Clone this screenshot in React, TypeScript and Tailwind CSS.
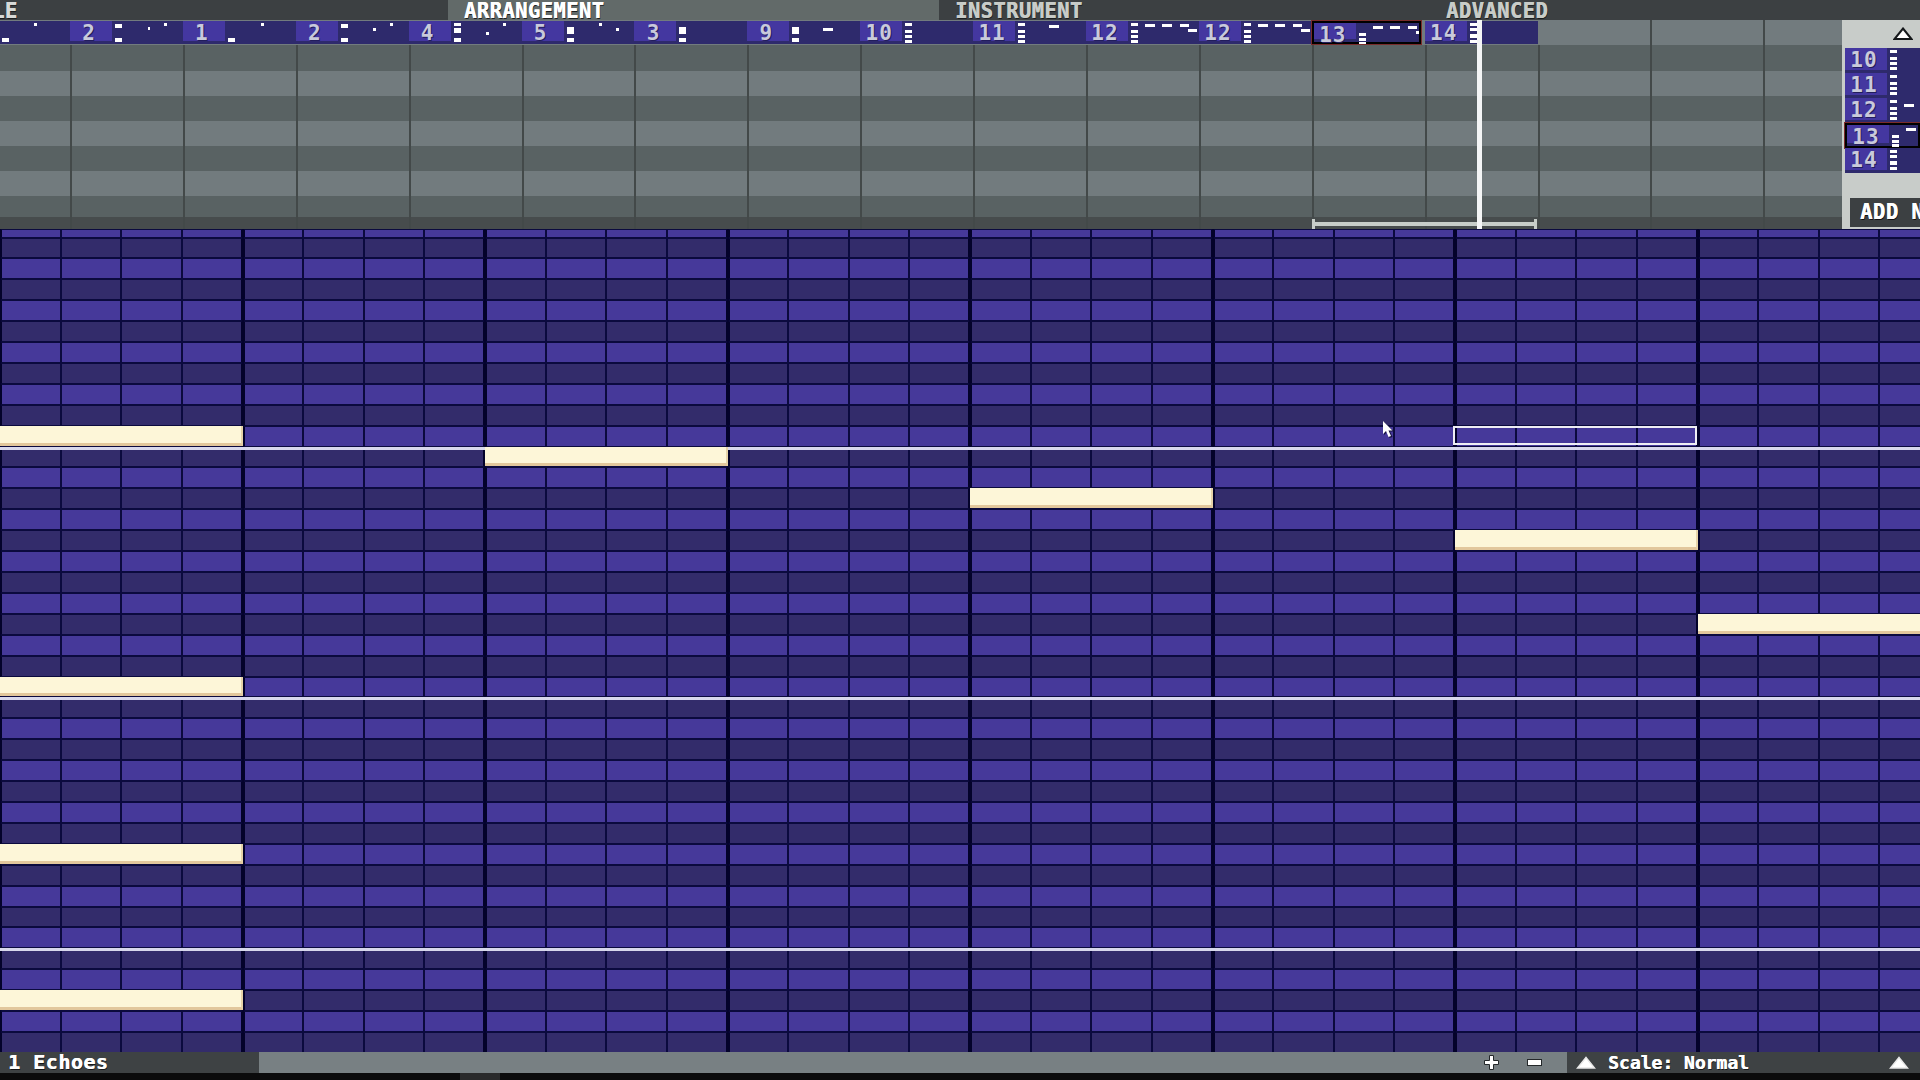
import React from 'react';

type Mark = [number, number, number, number];

// left stack of marks sits at x=3 in the thumbnail, the rest are short dashes
const TWO: Mark[] = [[3, 3, 7, 4], [3, 17, 7, 4]];
const LOW: Mark[] = [[3, 17, 7, 4]];
const BLOCK: Mark[] = [[3, 6, 7, 7], [3, 17, 7, 4]];
const FOUR: Mark[] = [[3, 2, 7, 3], [3, 9, 7, 3], [3, 14, 7, 3], [3, 19, 7, 3]];
const THREE: Mark[] = [[3, 10, 7, 3], [3, 15, 7, 3], [3, 19, 7, 3]];
const RUN: Mark[] = [[17, 3, 10, 3], [34, 3, 10, 3], [52, 3, 9, 3], [60, 8, 9, 3]];

const patterns: { num: string; selected?: boolean; marks: Mark[] }[] = [
  { num: '2', marks: [...TWO, [36, 6, 2, 3], [52, 2, 3, 3]] },
  { num: '1', marks: [...LOW, [36, 2, 3, 3]] },
  { num: '2', marks: [...TWO, [35, 7, 3, 3], [52, 2, 3, 3]] },
  { num: '4', marks: [[3, 2, 7, 3], [3, 7, 7, 5], [3, 17, 7, 4], [35, 11, 3, 3], [52, 2, 3, 3]] },
  { num: '5', marks: [...BLOCK, [35, 2, 3, 3], [52, 7, 3, 3]] },
  { num: '3', marks: BLOCK },
  { num: '9', marks: [...BLOCK, [34, 7, 10, 3]] },
  { num: '10', marks: FOUR },
  { num: '11', marks: [...FOUR, [34, 4, 10, 3]] },
  { num: '12', marks: [...FOUR, ...RUN] },
  { num: '12', marks: [...FOUR, ...RUN] },
  { num: '13', selected: true, marks: [...THREE, ...RUN] },
  { num: '14', marks: [[3, 2, 7, 3], [3, 7, 7, 3], [3, 13, 7, 4], [3, 19, 7, 3]] },
];

const listItems = [
  { num: '10', marks: FOUR },
  { num: '11', marks: FOUR },
  { num: '12', marks: [...FOUR, [17, 6, 10, 3]] as Mark[] },
  { num: '13', selected: true, marks: [...THREE, [17, 3, 10, 3]] as Mark[] },
  { num: '14', marks: [[3, 2, 7, 3], [3, 7, 7, 3], [3, 13, 7, 4], [3, 19, 7, 3]] as Mark[] },
];

const stripes = [
  'h-[25px] bg-[#727b7e]',
  'h-[26px] bg-[#596263]',
  'h-[25px] bg-[#727b7e]',
  'h-[25px] bg-[#596263]',
  'h-[25px] bg-[#727b7e]',
  'h-[25px] bg-[#596263]',
  'h-[25px] bg-[#727b7e]',
  'h-[21px] bg-[#596263]',
  'h-[12px] bg-[#474c4d]',
];

const notes = [
  'row-start-[11] col-start-1',
  'row-start-[12] col-start-9',
  'row-start-[14] col-start-17',
  'row-start-[16] col-start-25',
  'row-start-[20] col-start-29',
  'row-start-[23] col-start-1',
  'row-start-[31] col-start-1',
  'row-start-[38] col-start-1',
];

const octaves = ['row-start-[12]', 'row-start-[24]', 'row-start-[36]'];

const ROWS = Array.from({ length: 40 }, (_, i) => i);
const COLS = Array.from({ length: 32 }, (_, i) => i);

function Pattern({ num, marks, selected, tall }: { num: string; marks: Mark[]; selected?: boolean; tall?: boolean }) {
  return (
    <div
      className={`flex bg-[#2e2a6c] ${tall ? 'h-[25px]' : 'h-[23px]'} ${
        selected ? 'border-2 border-black outline outline-[#7a2b2b]' : ''
      } ${selected && !tall ? 'mr-[4px]' : ''}`}
    >
      <div className="w-[42px] shrink-0 border-b-[3px] border-[#2e2a6c] bg-[#4437a0] pr-[4px] text-center text-[21px] leading-[24px] font-bold tracking-[1px] text-[#c9cadb] [text-shadow:1px_1px_0_#221d5c]">
        {num}
      </div>
      <svg height="23" className="min-w-0 flex-1">
        {marks.map(([x, y, w, h], i) => (
          <rect key={i} x={x} y={y} width={w} height={h} fill="#ffffff" />
        ))}
      </svg>
    </div>
  );
}

function UpArrow({ outline }: { outline?: boolean }) {
  return (
    <svg width="20" height="14" viewBox="0 0 20 14" className="shrink-0">
      <path
        d="M10 1.5 L18.5 12 L1.5 12 Z"
        fill="#ffffff"
        stroke={outline ? '#15181a' : '#e8e8e8'}
        strokeWidth={outline ? 2 : 1.5}
      />
    </svg>
  );
}

function Arrangement() {
  return (
    <div className="relative min-w-0 flex-1">
      {stripes.map((stripe, row) => (
        <div key={row} className={`grid grid-cols-[70px_repeat(15,112.9px)_1fr] ${stripe}`}>
          <div className={row === 0 ? 'h-full pt-px' : 'h-full'}>
            {row === 0 && (
              <div className="h-[23px] bg-[#2e2a6c]">
                <svg width="70" height="23">
                  <rect x="2" y="17" width="7" height="4" fill="#ffffff" />
                  <rect x="34" y="2" width="3" height="3" fill="#ffffff" />
                </svg>
              </div>
            )}
          </div>
          {Array.from({ length: 15 }, (_, col) => {
            const pattern = row === 0 ? patterns[col] : undefined;
            if (pattern) {
              return (
                <div key={col} className="h-full pt-px">
                  <Pattern {...pattern} />
                </div>
              );
            }
            // the tick right after the last pattern does not reach the top stripe
            const noTick = row === 0 && col === 13;
            return <div key={col} className={noTick ? 'h-full' : 'h-full border-l-2 border-[#434949]'} />;
          })}
          <div className="h-full border-l-2 border-[#434949]" />
        </div>
      ))}

      {/* loop bracket and play head sit over the track */}
      <div className="absolute top-[202px] left-[1312px] h-[4px] w-[225px] bg-[#c7cdc9]">
        <div className="absolute top-[-3px] left-0 h-[10px] w-[3px] bg-[#c7cdc9]" />
        <div className="absolute top-[-3px] right-0 h-[10px] w-[3px] bg-[#c7cdc9]" />
      </div>
      <div className="absolute top-0 bottom-0 left-[1477px] w-[5px] bg-[#f4f5f6]" />
    </div>
  );
}

function PatternList() {
  return (
    <div className="flex w-[78px] shrink-0 flex-col bg-[#c8ccc9] pl-[3px]">
      <div className="flex h-[28px] items-center justify-end pr-[7px]">
        <UpArrow outline />
      </div>
      {listItems.map((item) => (
        <Pattern key={item.num} {...item} tall />
      ))}
      <div className="mt-[25px] ml-[5px] h-[29px] overflow-hidden whitespace-nowrap bg-[#3c4042] pl-[10px] text-[20.5px] leading-[28px] font-bold tracking-[0.5px] text-white [text-shadow:0.5px_0_0_#fff,1px_1px_0_#111]">
        ADD NEW
      </div>
    </div>
  );
}

function PianoRoll() {
  return (
    <div className="relative h-[823px] overflow-hidden bg-[#0b0a3e]">
      <div className="grid grid-cols-[repeat(32,60.625px)] grid-rows-[8.5px_repeat(39,20.92px)]">
        {ROWS.map((row) =>
          COLS.map((col) => (
            <div
              key={`${row}-${col}`}
              className={`border-y border-y-[#0b0a3e] ${row % 2 === 0 ? 'bg-[#46399a]' : 'bg-[#332c6b]'} ${
                col % 4 === 3 ? 'border-r-2 border-r-[#03022a]' : 'border-r border-r-[#0b0a3e]'
              } ${col % 4 === 0 ? 'border-l-2 border-l-[#03022a]' : 'border-l border-l-[#0b0a3e]'}`}
            />
          )),
        )}
      </div>

      {/* notes and octave lines use the same tracks, laid over the cells */}
      <div className="absolute inset-0 grid grid-cols-[repeat(32,60.625px)] grid-rows-[8.5px_repeat(39,20.92px)]">
        {octaves.map((row) => (
          <div key={row} className={`${row} col-span-full h-[3px] bg-[#d8d8ec]`} />
        ))}
        {notes.map((note) => (
          <div
            key={note}
            className={`${note} col-span-4 mb-[1px] border-r-2 border-b-[3px] border-r-[#e6d3a8] border-b-[#e2c79c] bg-[#fdf6d8]`}
          />
        ))}
        <div className="col-span-4 col-start-25 row-start-[11] -ml-[2px] mr-[1px] mb-[2px] border-2 border-[#eeeef4]" />
      </div>

      <svg width="13" height="19" viewBox="0 0 13 19" className="absolute top-[191px] left-[1382px]">
        <path d="M2 2 L2 15 L5 12 L7.5 18 L10.5 17 L8 11.5 L12 11.5 Z" fill="#15123f" />
        <path d="M1 1 L1 14 L4 11 L6.5 17 L9 16 L6.5 10.5 L10.5 10.5 Z" fill="#ffffff" />
      </svg>
    </div>
  );
}

export default function App() {
  return (
    <div className="flex h-[1080px] w-[1920px] flex-col overflow-hidden bg-black [font-family:'DejaVu_Sans_Mono',monospace]">
      {/* Tabs */}
      <div className="grid h-[20px] grid-cols-[448px_491px_491px_1fr] bg-[#3c4042] text-[20.5px] leading-[22px] font-bold tracking-[0.4px] text-[#c8ccc8] [text-shadow:0.5px_0_0_currentColor,1px_1px_0_#1c1e1f]">
        <div className="-ml-[8px] text-[#d8dad8]">LE</div>
        <div className="bg-[#626a69] pl-[16px] text-white">ARRANGEMENT</div>
        <div className="pl-[16px]">INSTRUMENT</div>
        <div className="pl-[16px]">ADVANCED</div>
      </div>

      {/* Song arrangement */}
      <div className="flex h-[209px]">
        <Arrangement />
        <PatternList />
      </div>

      <PianoRoll />

      {/* Status bar */}
      <div className="grid h-[21px] grid-cols-[259px_1fr_353px] text-[20px] leading-[21px] font-bold text-white [text-shadow:0.5px_0_0_#fff,1px_1px_0_#151617]">
        <div className="whitespace-pre bg-[#3e4244] pl-[8px] tracking-[0.5px]">1 Echoes</div>
        <div className="flex items-center justify-end gap-[28px] bg-[#788083] pr-[25px]">
          <svg width="15" height="15" viewBox="0 0 15 15">
            <path d="M5.5 0.5 H9.5 V5.5 H14.5 V9.5 H9.5 V14.5 H5.5 V9.5 H0.5 V5.5 H5.5 Z" fill="#ffffff" stroke="#24282a" />
          </svg>
          <svg width="15" height="7" viewBox="0 0 15 7">
            <rect x="0.5" y="0.5" width="14" height="6" fill="#ffffff" stroke="#24282a" />
          </svg>
        </div>
        <div className="flex items-center bg-[#3e4244] pr-[11px] pl-[9px]">
          <UpArrow />
          <span className="ml-[12px] text-[18px]">Scale: Normal</span>
          <span className="ml-auto">
            <UpArrow />
          </span>
        </div>
      </div>
      <div className="flex h-[7px] bg-[#0b0b0c]">
        <div className="ml-[460px] w-[40px] bg-[#2a2a2b]" />
      </div>
    </div>
  );
}
